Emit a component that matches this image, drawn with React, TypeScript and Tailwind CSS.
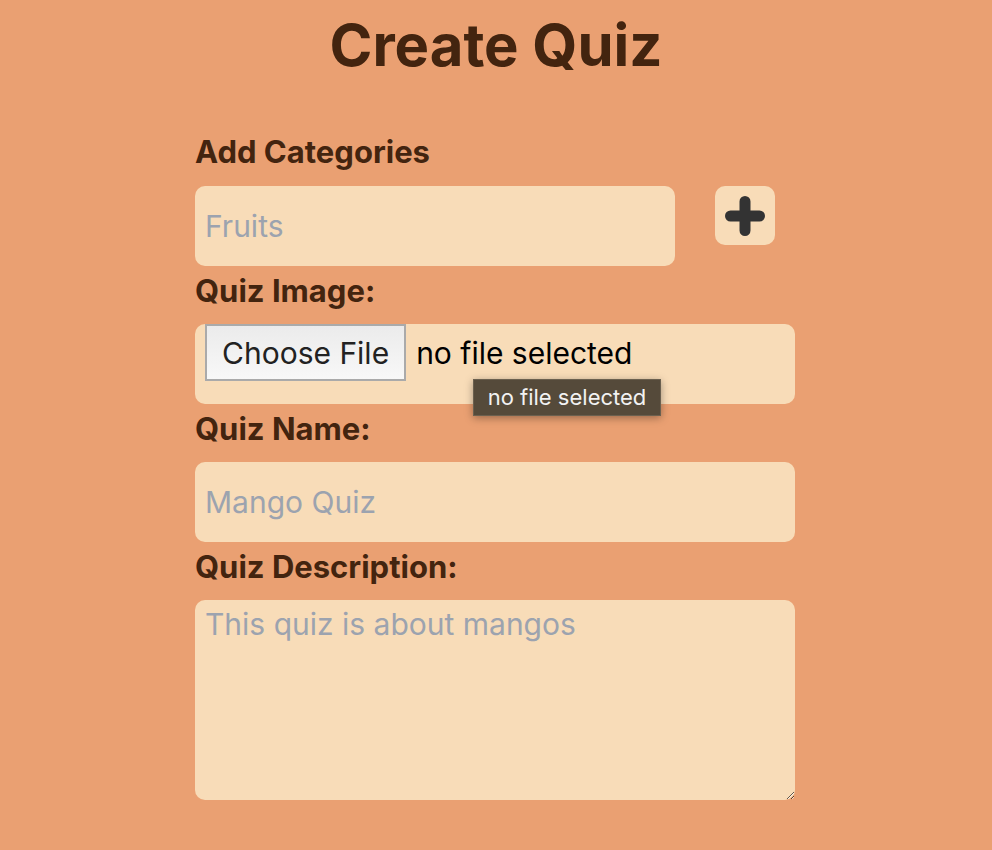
export default function App() {
  return (
    <div className="min-h-screen bg-[#eaa072] font-['Inter',sans-serif] text-[#43240f]">
      <h1 className="pt-[16px] text-center text-[58px] font-bold leading-none">Create Quiz</h1>

      <form className="mx-auto mt-[60px] flex w-[600px] -translate-x-px flex-col">
        <label className="mb-4 text-[31px] leading-9 font-bold">Add Categories</label>
        <div className="flex items-start">
          <input
            type="text"
            placeholder="Fruits"
            className="h-[80px] w-[480px] rounded-[10px] bg-[#f8dcb8] px-[10px] text-3xl text-black outline-none placeholder:text-[#9ca3af]"
          />
          <button
            type="button"
            className="ml-[40px] flex h-[59px] w-[60px] items-center justify-center rounded-[10px] bg-[#f8dcb8]"
          >
            <svg width="40" height="40" viewBox="0 0 40 40">
              <path d="M20 5.5V34.5M5.5 20H34.5" stroke="#333333" strokeWidth="11" strokeLinecap="round" />
            </svg>
          </button>
        </div>

        <label className="mt-[7px] mb-[15px] text-[31px] leading-9 font-bold">Quiz Image:</label>
        <div className="relative flex h-[80px] items-start rounded-[10px] bg-[#f8dcb8] pl-[10px]">
          <span className="flex h-[57px] items-center border-2 border-[#aaaaaa] bg-gradient-to-b from-[#ebebeb] to-[#f8f8f8] px-[15px] text-3xl text-[#222]">
            Choose File
          </span>
          <span className="ml-[10px] flex h-[57px] items-center text-3xl text-black">no file selected</span>
          <div className="absolute top-[55px] left-[278px] flex h-[37px] w-[188px] items-center justify-center border border-[#6b604f] bg-[#554a3a] text-[22px] text-[#f2f2f2] shadow-[0_2px_8px_rgba(0,0,0,0.35)]">
            no file selected
          </div>
        </div>

        <label className="mt-[7px] mb-[15px] text-[31px] leading-9 font-bold">Quiz Name:</label>
        <input
          type="text"
          placeholder="Mango Quiz"
          className="h-[80px] w-full rounded-[10px] bg-[#f8dcb8] px-[10px] text-3xl text-black outline-none placeholder:text-[#9ca3af]"
        />

        <label className="mt-[7px] mb-[15px] text-[31px] leading-9 font-bold">Quiz Description:</label>
        <textarea
          placeholder="This quiz is about mangos"
          className="h-[200px] w-full rounded-[10px] bg-[#f8dcb8] px-[10px] py-[6px] text-3xl text-black outline-none placeholder:text-[#9ca3af]"
        ></textarea>
      </form>
    </div>
  );
}
